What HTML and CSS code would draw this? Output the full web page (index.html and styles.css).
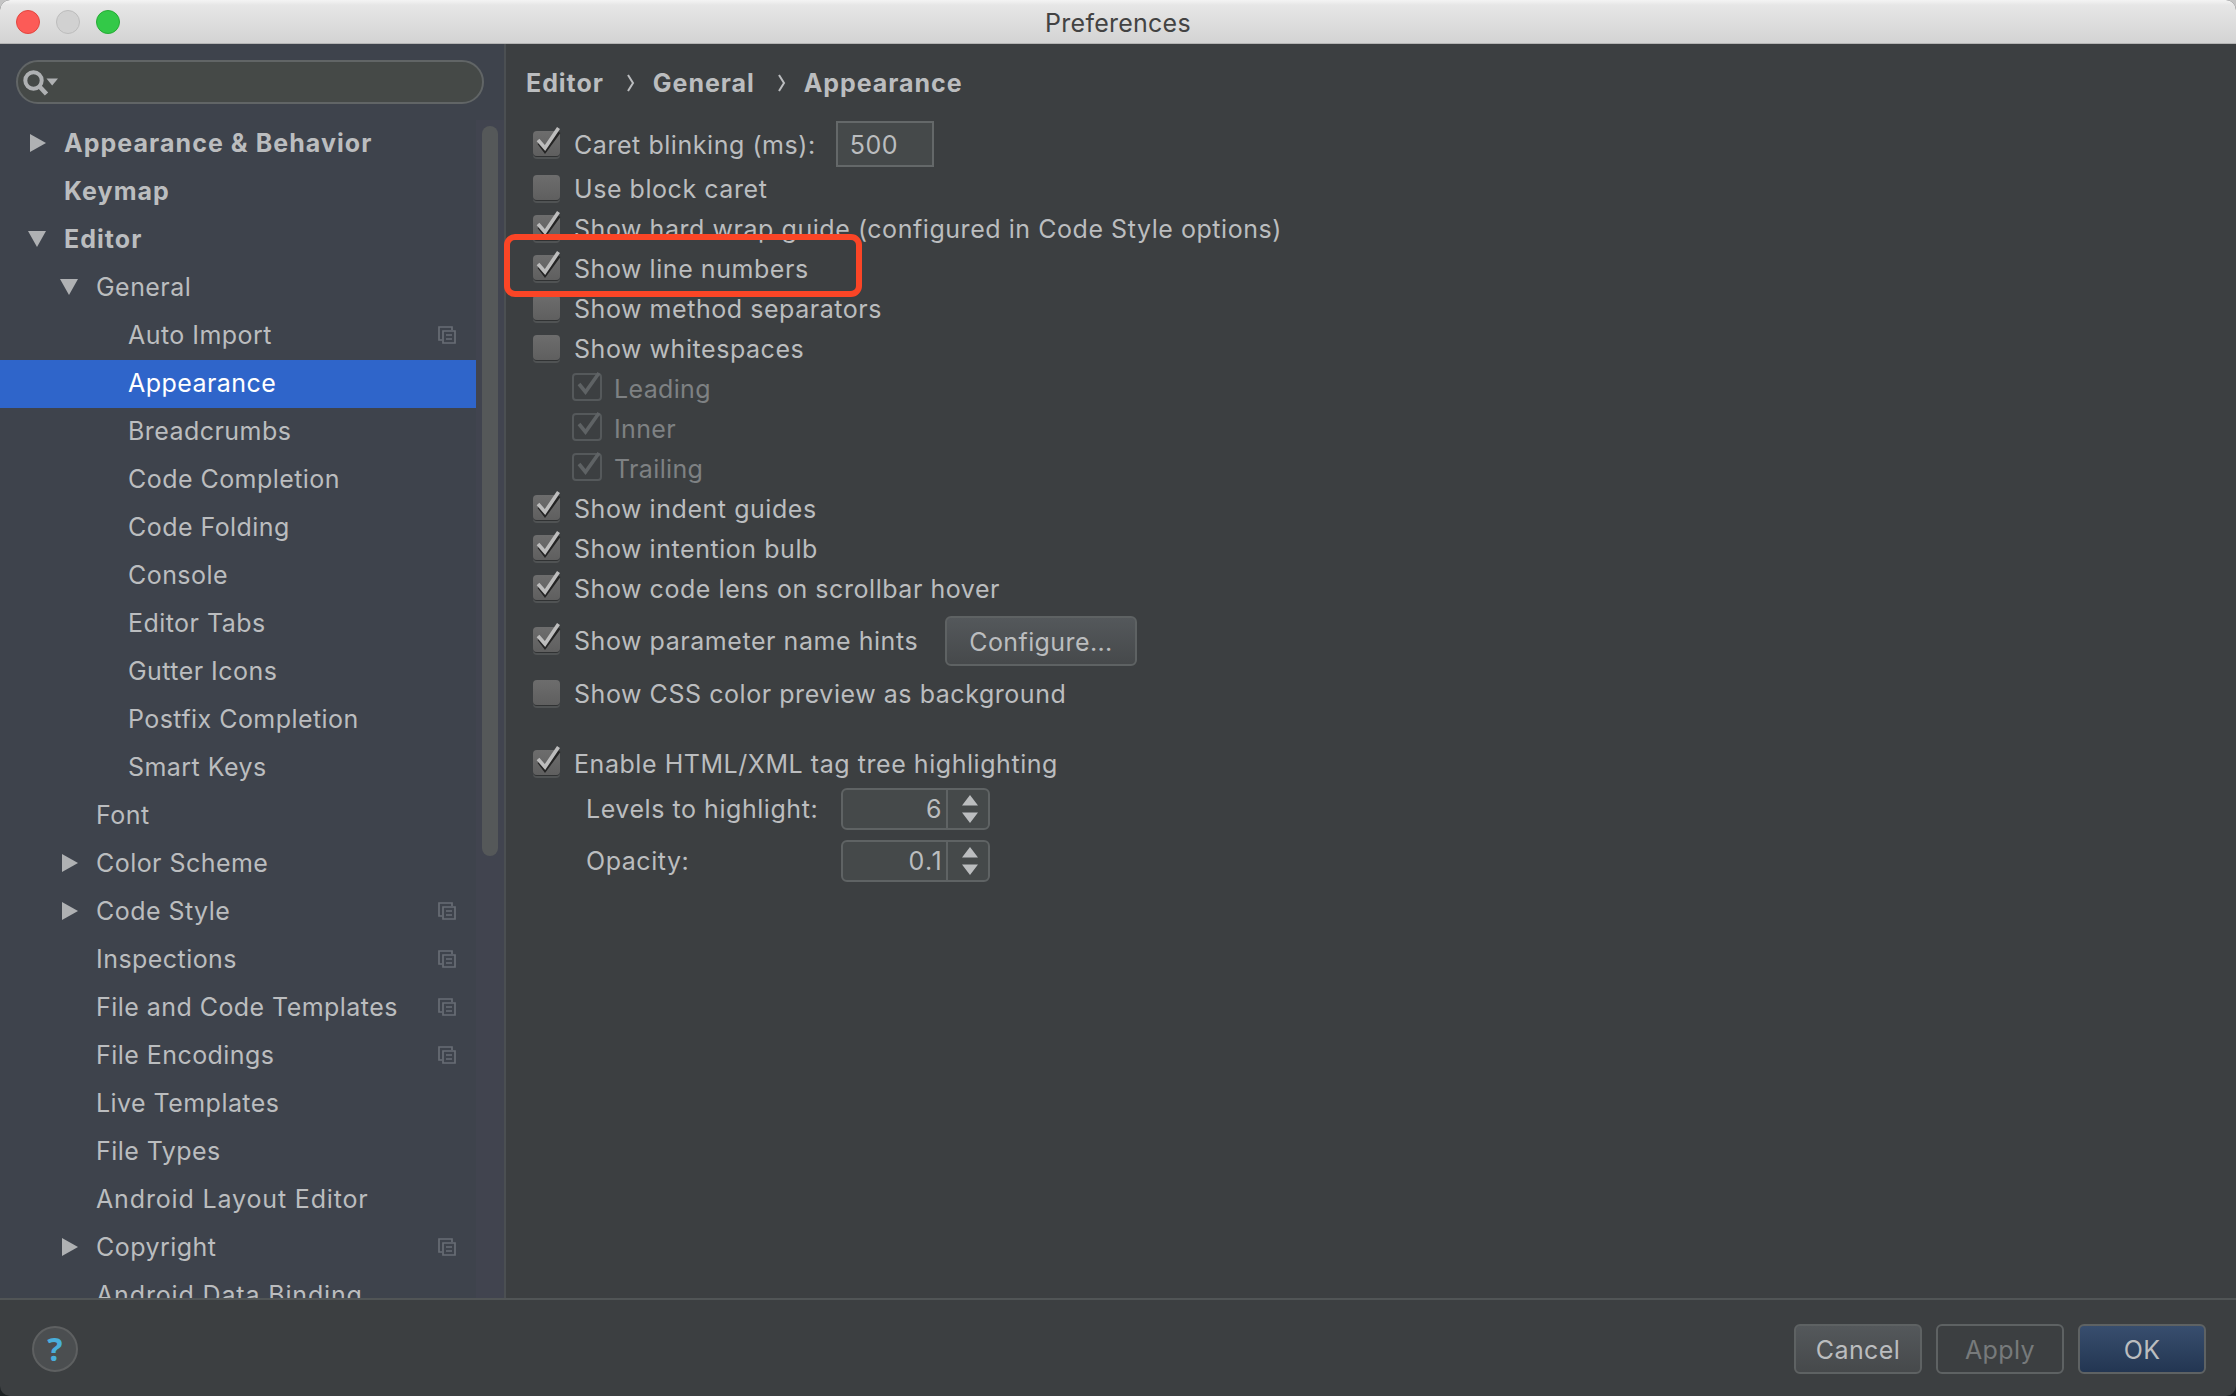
FILE: index.html
```
<!DOCTYPE html>
<html lang="en">
<head>
  <meta charset="UTF-8" />
  <title>Preferences</title>
  <link rel="stylesheet" href="styles.css">
</head>
<body>
  <svg class="defs">
    <symbol id="right" viewBox="0 0 18 18"><path d="M2 0 L18 9 L2 18 Z" /></symbol>
    <symbol id="down" viewBox="0 0 18 18"><path d="M0 1 H18 L9 17 Z" /></symbol>
    <symbol id="copy" viewBox="0 0 18 18">
      <path d="M14 4 V1 H1 V14 H4 M5 5 H17 V17 H5 Z M8 9 H14 M8 13 H14" fill="none" stroke="currentColor" stroke-width="1.7" />
    </symbol>
    <symbol id="tick" viewBox="0 0 34 34">
      <path d="M9 18 L15 26 L29 7" fill="none" stroke="#242424" stroke-width="3.6" />
      <path d="M8 15 L15 23 L28.5 3" fill="none" stroke="#bdbdbd" stroke-width="3.6" />
    </symbol>
    <symbol id="tick-off" viewBox="0 0 34 34">
      <path d="M9 14 L15.5 22 L29 3" fill="none" stroke="#5f6365" stroke-width="3.6" />
    </symbol>
  </svg>

  <div class="window">
    <header class="titlebar">
      <div class="lights">
        <span class="light red"></span>
        <span class="light gray"></span>
        <span class="light green"></span>
      </div>
      <h1>Preferences</h1>
    </header>

    <div class="content">
      <aside class="sidebar">
        <div class="search">
          <svg width="38" height="28" viewBox="0 0 38 28">
            <circle cx="11.5" cy="10.5" r="8.2" fill="none" stroke="#afb1b3" stroke-width="4" />
            <path d="M17 16 L24.5 24" stroke="#afb1b3" stroke-width="4.6" />
            <path d="M24.5 8.5 H36 L30.2 15.5 Z" fill="#afb1b3" />
          </svg>
        </div>
        <div class="tree-area">
          <ul class="tree">
            <li class="top"><svg class="arrow"><use href="#right" /></svg>Appearance &amp; Behavior</li>
            <li class="top"><span class="arrow"></span>Keymap</li>
            <li class="top"><svg class="arrow"><use href="#down" /></svg>Editor</li>
            <li class="sub"><svg class="arrow"><use href="#down" /></svg>General</li>
            <li class="leaf">Auto Import<svg class="copy"><use href="#copy" /></svg></li>
            <li class="leaf selected">Appearance</li>
            <li class="leaf">Breadcrumbs</li>
            <li class="leaf">Code Completion</li>
            <li class="leaf">Code Folding</li>
            <li class="leaf">Console</li>
            <li class="leaf">Editor Tabs</li>
            <li class="leaf">Gutter Icons</li>
            <li class="leaf">Postfix Completion</li>
            <li class="leaf">Smart Keys</li>
            <li class="sub"><span class="arrow"></span>Font</li>
            <li class="sub"><svg class="arrow"><use href="#right" /></svg>Color Scheme</li>
            <li class="sub"><svg class="arrow"><use href="#right" /></svg>Code Style<svg class="copy"><use href="#copy" /></svg></li>
            <li class="sub"><span class="arrow"></span>Inspections<svg class="copy"><use href="#copy" /></svg></li>
            <li class="sub"><span class="arrow"></span>File and Code Templates<svg class="copy"><use href="#copy" /></svg></li>
            <li class="sub"><span class="arrow"></span>File Encodings<svg class="copy"><use href="#copy" /></svg></li>
            <li class="sub"><span class="arrow"></span>Live Templates</li>
            <li class="sub"><span class="arrow"></span>File Types</li>
            <li class="sub wide"><span class="arrow"></span>Android Layout Editor</li>
            <li class="sub"><svg class="arrow"><use href="#right" /></svg>Copyright<svg class="copy"><use href="#copy" /></svg></li>
            <li class="sub wide"><span class="arrow"></span>Android Data Binding</li>
          </ul>
          <div class="scrollbar"><div class="thumb"></div></div>
        </div>
      </aside>

      <main>
        <nav class="crumbs">
          <span>Editor</span>
          <svg width="8" height="18" viewBox="0 0 8 18"><path d="M1 1 L6 9 L1 17" /></svg>
          <span>General</span>
          <svg width="8" height="18" viewBox="0 0 8 18"><path d="M1 1 L6 9 L1 17" /></svg>
          <span>Appearance</span>
        </nav>

        <div class="option tall"><span class="box"><svg><use href="#tick" /></svg></span>Caret blinking (ms):<span class="field">500</span></div>
        <div class="option"><span class="box"></span>Use block caret</div>
        <div class="option"><span class="box"><svg><use href="#tick" /></svg></span>Show hard wrap guide (configured in Code Style options)</div>
        <div class="option marked"><span class="box"><svg><use href="#tick" /></svg></span>Show line numbers</div>
        <div class="option"><span class="box"></span>Show method separators</div>
        <div class="option"><span class="box"></span>Show whitespaces</div>
        <div class="option disabled"><span class="box"><svg><use href="#tick-off" /></svg></span>Leading</div>
        <div class="option disabled"><span class="box"><svg><use href="#tick-off" /></svg></span>Inner</div>
        <div class="option disabled"><span class="box"><svg><use href="#tick-off" /></svg></span>Trailing</div>
        <div class="option"><span class="box"><svg><use href="#tick" /></svg></span>Show indent guides</div>
        <div class="option"><span class="box"><svg><use href="#tick" /></svg></span>Show intention bulb</div>
        <div class="option"><span class="box"><svg><use href="#tick" /></svg></span>Show code lens on scrollbar hover</div>
        <div class="option hints"><span class="box"><svg><use href="#tick" /></svg></span><span class="label">Show parameter name hints</span><button class="btn configure">Configure...</button></div>
        <div class="option"><span class="box"></span>Show CSS color preview as background</div>
        <div class="option tags"><span class="box"><svg><use href="#tick" /></svg></span>Enable HTML/XML tag tree highlighting</div>

        <div class="spinners">
          <label>Levels to highlight:</label>
          <div class="spinner">
            <span class="value">6</span>
            <svg width="16" height="28" viewBox="0 0 16 28"><path d="M8 0 L16 10.5 H0 Z M0 17.5 H16 L8 28 Z" /></svg>
          </div>
          <label>Opacity:</label>
          <div class="spinner">
            <span class="value">0.1</span>
            <svg width="16" height="28" viewBox="0 0 16 28"><path d="M8 0 L16 10.5 H0 Z M0 17.5 H16 L8 28 Z" /></svg>
          </div>
        </div>
      </main>
    </div>

    <footer>
      <button class="help">?</button>
      <div class="actions">
        <button class="btn">Cancel</button>
        <button class="btn off">Apply</button>
        <button class="btn primary">OK</button>
      </div>
    </footer>
  </div>
</body>
</html>
```
FILE: styles.css
```
* {
  box-sizing: border-box;
  margin: 0;
  padding: 0;
}

body {
  background: linear-gradient(#c4c4c4 50%, #1d2224 50%);
  font-family: Inter, "Liberation Sans", sans-serif;
  font-size: 25px;
  letter-spacing: 0.45px;
  color: #bbbdbf;
  overflow: hidden;
}

.defs {
  display: none;
}

.window {
  width: 2236px;
  height: 1396px;
  display: flex;
  flex-direction: column;
  background: #3c3f41;
  border-radius: 10px;
  overflow: hidden;
}

/* Title bar */
.titlebar {
  height: 44px;
  flex: none;
  display: grid;
  grid-template-columns: 1fr auto 1fr;
  align-items: center;
  padding: 0 16px;
  background: linear-gradient(#f4f4f4, #e6e6e6 12%, #d3d3d3);
  border-bottom: 1px solid #b4b4b4;
}

.titlebar h1 {
  padding-top: 2px;
  font-size: 25px;
  font-weight: 400;
  letter-spacing: 0.25px;
  color: #434343;
}

.lights {
  display: flex;
  gap: 16px;
}

.light {
  width: 24px;
  height: 24px;
  border-radius: 50%;
  border: 1px solid;
}

.red {
  background: #fc5b57;
  border-color: #e2463f;
}

.gray {
  background: #d1d1d1;
  border-color: #bcbcbc;
}

.green {
  background: #33c948;
  border-color: #26ab35;
}

.content {
  flex: 1;
  min-height: 0;
  display: flex;
}

/* Sidebar */
.sidebar {
  width: 506px;
  flex: none;
  display: flex;
  flex-direction: column;
  background: #3e434c;
  border-right: 2px solid #4b4f52;
}

.search {
  height: 44px;
  flex: none;
  margin: 16px 20px 16px 16px;
  padding: 8px 0 0 4px;
  border: 2px solid #616566;
  border-radius: 22px;
  background: #454947;
}

.search svg {
  display: block;
}

.tree-area {
  flex: 1;
  min-height: 0;
  display: flex;
}

.tree {
  flex: 1;
  list-style: none;
  overflow: hidden;
}

.tree li {
  height: 48px;
  display: flex;
  align-items: center;
  padding-right: 20px;
  padding-bottom: 2px;
  white-space: nowrap;
}

.tree .top {
  padding-left: 28px;
  font-weight: 700;
  letter-spacing: 1.05px;
}

.tree .sub {
  padding-left: 60px;
}

.tree .leaf {
  padding-left: 128px;
}

.tree .wide {
  letter-spacing: 0.85px;
}

.tree .selected {
  background: #2f65ca;
  color: #fff;
}

.arrow {
  width: 18px;
  height: 18px;
  margin-right: 18px;
  fill: #afb1b3;
}

.copy {
  width: 18px;
  height: 18px;
  margin-left: auto;
  color: #686d75;
}

.scrollbar {
  width: 28px;
  padding: 6px 6px 0;
  background: #41444f;
}

.thumb {
  width: 16px;
  height: 730px;
  border-radius: 8px;
  background: #555859;
}

/* Settings panel */
main {
  flex: 1;
  padding: 14px 0 0 20px;
  letter-spacing: 0.55px;
}

.crumbs {
  height: 50px;
  margin-bottom: 13px;
  display: flex;
  align-items: center;
  font-weight: 700;
  letter-spacing: 0.95px;
}

.crumbs svg {
  margin: 0 18px 0 23px;
  fill: none;
  stroke: #bbbdbf;
  stroke-width: 2;
}

.option {
  height: 40px;
  padding: 2px 0 0 7px;
  display: flex;
  align-items: center;
  position: relative;
  white-space: nowrap;
}

.tall {
  height: 46px;
  margin-bottom: 1px;
}

.box {
  width: 27px;
  height: 25px;
  margin: 0 14px 4px 0;
  position: relative;
  border-radius: 4px;
  background: linear-gradient(#6d6d6d, #5f5f5f);
  box-shadow: 0 1px 0 #303233, 0 3px 0 #505354;
}

.box svg {
  width: 34px;
  height: 34px;
  position: absolute;
  left: -3px;
  top: -6px;
}

.field {
  width: 98px;
  height: 46px;
  margin: 0 0 2px 20px;
  padding-left: 12px;
  line-height: 44px;
  border: 2px solid #646869;
  background: #45494a;
}

/* Highlight frame over the row */
.marked::after {
  content: "";
  box-sizing: border-box;
  position: absolute;
  left: -22px;
  top: -14px;
  width: 358px;
  height: 63px;
  border: 6px solid #fb4526;
  border-radius: 11px;
  z-index: 1;
}

.disabled {
  padding-left: 46px;
  letter-spacing: 0.35px;
  color: #7e8183;
}

.disabled .box {
  width: 30px;
  height: 28px;
  margin-right: 12px;
  background: none;
  border: 2px solid #55595b;
  box-shadow: none;
}

.disabled .box svg {
  left: -4px;
  top: -5px;
}

.hints {
  height: 50px;
  margin: 8px 0 7px;
  padding-top: 0;
}

.label {
  width: 371px;
}

.tags {
  margin-top: 30px;
}

.spinners {
  display: grid;
  grid-template-columns: 255px 149px;
  row-gap: 10px;
  align-items: center;
  padding: 5px 0 0 60px;
}

.spinner {
  height: 42px;
  display: flex;
  align-items: center;
  border: 2px solid #5f6364;
  border-radius: 6px;
  background: #45494a;
}

.value {
  width: 105px;
  height: 38px;
  padding-right: 3px;
  line-height: 38px;
  letter-spacing: 1.4px;
  text-align: right;
  border-right: 2px solid #5f6364;
}

.spinner svg {
  margin-left: 14px;
  fill: #bbbdbf;
}

/* Buttons */
.btn {
  width: 128px;
  height: 50px;
  padding-top: 1px;
  font: inherit;
  letter-spacing: 0.4px;
  color: inherit;
  border: 2px solid #5e6263;
  border-radius: 6px;
  background: linear-gradient(#54585b, #46494b);
}

.configure {
  width: 192px;
}

.off {
  color: #777a7b;
  background: none;
}

.primary {
  background: linear-gradient(#384e6e, #233652);
}

footer {
  height: 98px;
  flex: none;
  padding: 2px 30px 0 32px;
  display: flex;
  justify-content: space-between;
  align-items: center;
  border-top: 2px solid #515556;
}

.help {
  width: 46px;
  height: 46px;
  border-radius: 50%;
  border: 2px solid #5e6061;
  background: #4b4e50;
  font: bold 32px "Open Sans", sans-serif;
  line-height: 40px;
  color: #49aedb;
}

.actions {
  display: flex;
  gap: 14px;
}
```
